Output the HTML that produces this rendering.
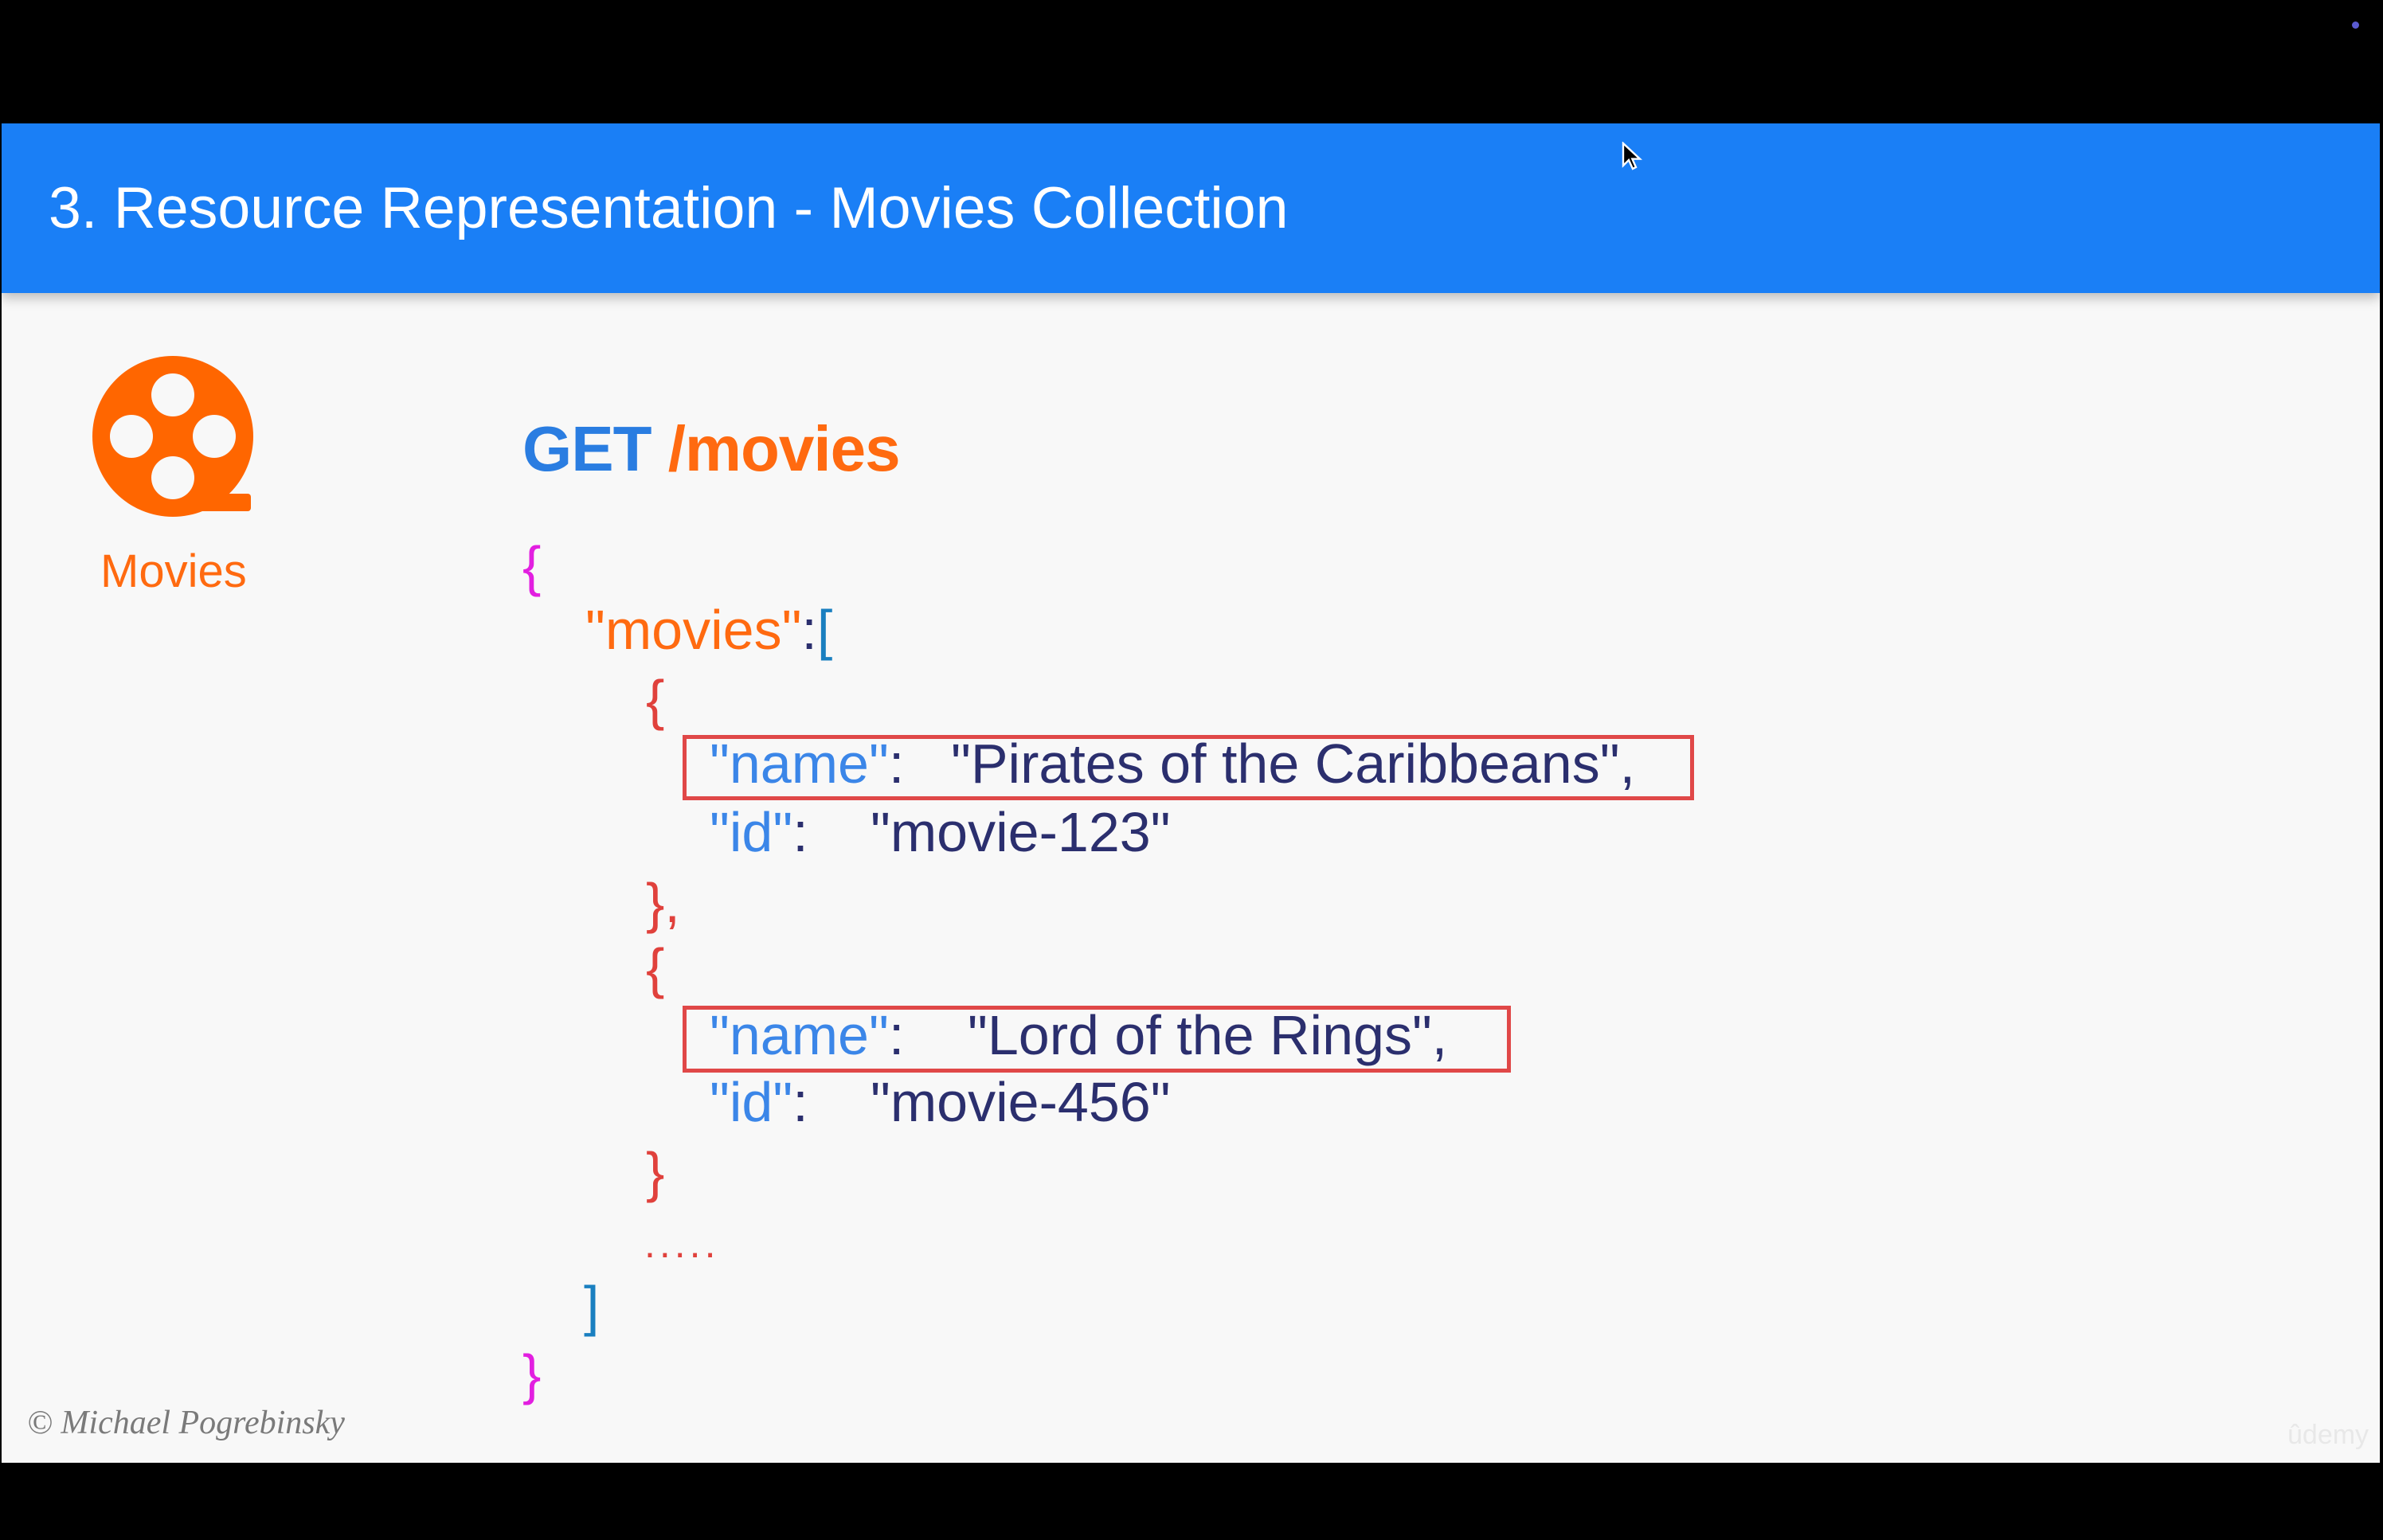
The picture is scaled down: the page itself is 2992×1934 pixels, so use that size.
<!DOCTYPE html>
<html><head><meta charset="utf-8"><style>
*{margin:0;padding:0;box-sizing:border-box}
body{width:2992px;height:1934px;background:#000;position:relative;overflow:hidden;font-family:"Liberation Sans",Arial,sans-serif}
.slide{position:absolute;left:2px;top:155px;width:2986px;height:1682px;background:#f8f8f8}
.hdr{position:absolute;left:0;top:0;width:100%;height:213px;background:#1a7ff6;box-shadow:0 6px 14px rgba(0,0,0,.25)}
.title{position:absolute;left:59px;top:63px;color:#fff;font-size:73.5px;white-space:nowrap}
.t{position:absolute;white-space:nowrap;line-height:1}
.c{font-size:70px}
.k{color:#3b86e8}.v{color:#2b2f6e}.r{color:#e0413c}.p{color:#e21fe0}.b{color:#1a7fc0}.o{color:#ff6a10}
.box{position:absolute;border:5px solid #e04848}
</style></head><body>
<div class="slide">
 <div class="hdr"><div class="title">3. Resource Representation - Movies Collection</div></div>
 <svg style="position:absolute;left:110px;top:290px" width="220" height="220" viewBox="0 0 220 220">
  <circle cx="105" cy="103" r="101" fill="#ff6600"/>
  <rect x="105" y="175" width="98" height="22" rx="4" fill="#ff6600"/>
  <circle cx="105" cy="51" r="27" fill="#f8f8f8"/>
  <circle cx="105" cy="155" r="27" fill="#f8f8f8"/>
  <circle cx="53" cy="103" r="27" fill="#f8f8f8"/>
  <circle cx="157" cy="103" r="27" fill="#f8f8f8"/>
 </svg>
 <div class="t o" style="left:124px;top:534px;font-size:58px">Movies</div>
 <div class="t" style="left:654px;top:369px;font-size:80px;font-weight:bold;letter-spacing:-1px"><span style="color:#2a7de1">GET</span> <span class="o">/movies</span></div>
 <div class="t c p" style="left:654px;top:521px">{</div>
 <div class="t c" style="left:733px;top:601px"><span class="o">"movies"</span><span class="v">:</span><span class="b">[</span></div>
 <div class="t c r" style="left:809px;top:689px">{</div>
 <div class="box" style="left:855px;top:768px;width:1270px;height:82px"></div>
 <div class="t c" style="left:889px;top:769px"><span class="k">"name"</span><span class="v">:</span></div>
 <div class="t c v" style="left:1192px;top:769px">"Pirates of the Caribbeans",</div>
 <div class="t c k" style="left:889px;top:855px">"id"<span class="v">:</span></div>
 <div class="t c v" style="left:1091px;top:855px">"movie-123"</div>
 <div class="t c r" style="left:809px;top:944px">},</div>
 <div class="t c r" style="left:809px;top:1026px">{</div>
 <div class="box" style="left:855px;top:1108px;width:1040px;height:84px"></div>
 <div class="t c" style="left:889px;top:1110px"><span class="k">"name"</span><span class="v">:</span></div>
 <div class="t c v" style="left:1213px;top:1110px">"Lord of the Rings",</div>
 <div class="t c k" style="left:889px;top:1194px">"id"<span class="v">:</span></div>
 <div class="t c v" style="left:1091px;top:1194px">"movie-456"</div>
 <div class="t c r" style="left:809px;top:1282px">}</div>
 <div class="t r" style="left:807px;top:1382px;font-size:50px;letter-spacing:5px">.....</div>
 <div class="t c b" style="left:731px;top:1450px">]</div>
 <div class="t c p" style="left:654px;top:1536px">}</div>
 <div class="t" style="left:32px;top:1611px;font-family:'Liberation Serif',serif;font-style:italic;font-size:42px;color:#7a7a7a">© Michael Pogrebinsky</div>
 <div class="t" style="left:2870px;top:1630px;font-size:34px;color:#e8e8e8">ûdemy</div>
</div>
<svg style="position:absolute;left:2036px;top:178px" width="28" height="38" viewBox="0 0 14 19"><path d="M1 1 L1 15 L4.5 11.5 L7 17 L9 16 L6.7 10.8 L11.5 10.8 Z" fill="#000" stroke="#fff" stroke-width="1.2"/></svg>
<div style="position:absolute;left:2953px;top:27px;width:9px;height:9px;border-radius:50%;background:#5a5ad0"></div>
</body></html>
